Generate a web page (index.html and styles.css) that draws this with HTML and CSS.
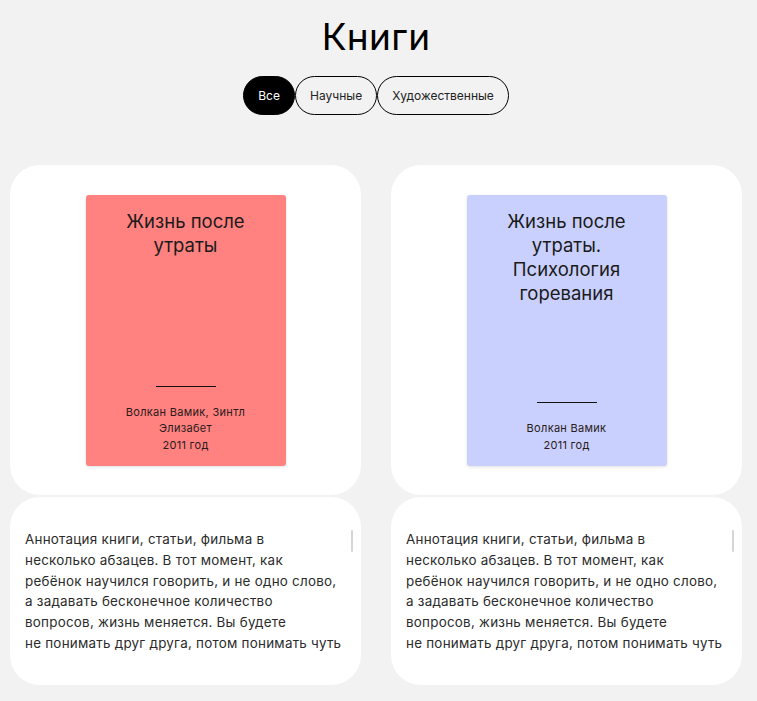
FILE: index.html
```html
<!DOCTYPE html>
<html lang="ru">
<head>
<meta charset="utf-8">
<link rel="stylesheet" href="styles.css">
</head>
<body>
<main class="page">
  <h1 class="title">Книги</h1>
  <nav class="filters">
    <button class="chip chip-active">Все</button>
    <button class="chip">Научные</button>
    <button class="chip">Художественные</button>
  </nav>
  <section class="grid">
    <article class="item">
      <div class="card cover-card">
        <div class="cover cover-red">
          <div class="cover-title">Жизнь после утраты</div>
          <div class="cover-foot">
            <div class="rule"></div>
            <div class="meta">Волкан Вамик, Зинтл Элизабет</div>
            <div class="meta">2011 год</div>
          </div>
        </div>
      </div>
      <div class="card text-card">
        <p class="annotation">Аннотация книги, статьи, фильма в<br>несколько абзацев. В тот момент, как<br>ребёнок научился говорить, и не одно слово,<br>а задавать бесконечное количество<br>вопросов, жизнь меняется. Вы будете<br>не понимать друг друга, потом понимать чуть</p>
        <div class="scroll-thumb"></div>
      </div>
    </article>
    <article class="item">
      <div class="card cover-card">
        <div class="cover cover-blue">
          <div class="cover-title">Жизнь после утраты. Психология горевания</div>
          <div class="cover-foot">
            <div class="rule"></div>
            <div class="meta">Волкан Вамик</div>
            <div class="meta">2011 год</div>
          </div>
        </div>
      </div>
      <div class="card text-card">
        <p class="annotation">Аннотация книги, статьи, фильма в<br>несколько абзацев. В тот момент, как<br>ребёнок научился говорить, и не одно слово,<br>а задавать бесконечное количество<br>вопросов, жизнь меняется. Вы будете<br>не понимать друг друга, потом понимать чуть</p>
        <div class="scroll-thumb"></div>
      </div>
    </article>
  </section>
</main>
</body>
</html>
```

FILE: styles.css
```css
* { box-sizing: border-box; }
html, body { margin: 0; padding: 0; }
body {
  background: #f2f2f2;
  font-family: "Inter", "Roboto", sans-serif;
  color: #111;
}
.page {
  padding: 12px 15px 16px 10px;
}
.title {
  margin: 0;
  text-align: center;
  font-weight: 400;
  font-size: 37px;
  line-height: 50px;
  color: #000;
  letter-spacing: 0.3px;
}
.filters {
  display: flex;
  justify-content: center;
  margin-top: 14px;
}
.chip {
  font-family: inherit;
  font-size: 12px;
  height: 39px;
  padding: 0 14px;
  border: 1px solid #000;
  border-radius: 20px;
  background: transparent;
  color: #222;
  margin: 0;
}
.chip-active {
  background: #000;
  color: #fff;
  width: 52px;
  padding: 0;
}
.grid {
  display: grid;
  grid-template-columns: 351px 351px;
  column-gap: 30px;
  margin-top: 50px;
}
.item {
  display: flex;
  flex-direction: column;
  gap: 2px;
}
.card {
  background: #fff;
  border-radius: 30px;
}
.cover-card {
  height: 330px;
  padding: 30px 0 29px;
  display: flex;
  justify-content: center;
}
.cover {
  width: 200px;
  height: 271px;
  border-radius: 3px;
  box-shadow: 0 1px 3px rgba(0,0,0,0.12);
  display: flex;
  flex-direction: column;
  justify-content: space-between;
  align-items: center;
  text-align: center;
  padding: 14px 20px 13px;
}
.cover-red { background: #ff8280; }
.cover-blue { background: #c9d0fd; }
.cover-title {
  font-size: 18.5px;
  line-height: 24px;
  color: #1a1a1a;
  padding: 0 10px;
}
.cover-foot {
  display: flex;
  flex-direction: column;
  align-items: center;
}
.rule {
  width: 60px;
  height: 1px;
  background: #111;
  margin-bottom: 17px;
}
.meta {
  font-size: 11px;
  line-height: 16.5px;
  letter-spacing: 0.3px;
  color: #2a1a1a;
  max-width: 160px;
}
.text-card {
  height: 188px;
  position: relative;
  padding: 32px 12px 0 15px;
}
.annotation {
  margin: 0;
  font-size: 13.4px;
  line-height: 20.8px;
  letter-spacing: 0.25px;
  color: #2b2b2b;
  white-space: nowrap;
}
.scroll-thumb {
  position: absolute;
  top: 33px;
  right: 8px;
  width: 2px;
  height: 22px;
  background: #d6d6d6;
  border-radius: 1px;
}
```
